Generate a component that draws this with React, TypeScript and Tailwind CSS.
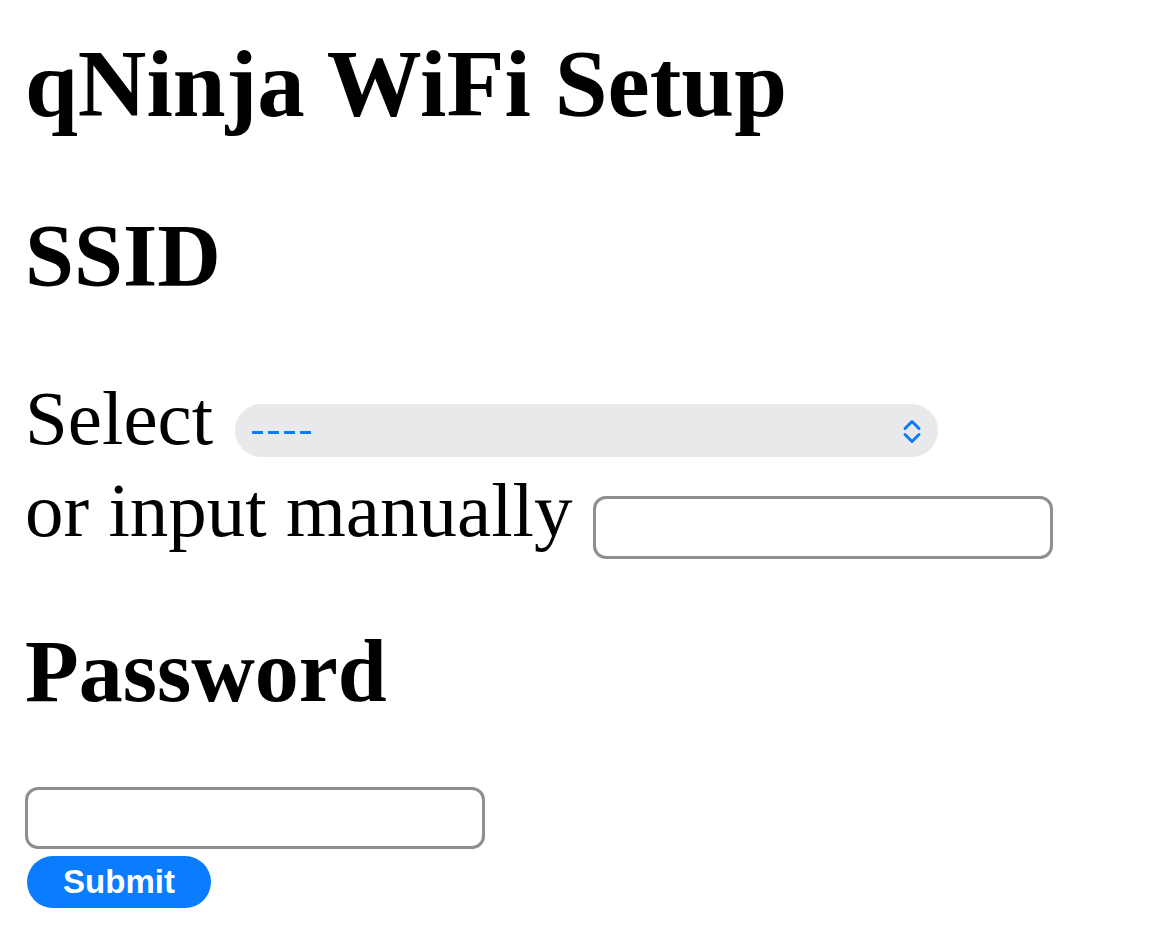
import React from "react";

const serif = { fontFamily: '"Liberation Serif", "Times New Roman", serif' };

export default function App() {
  return (
    <div className="min-h-[940px] w-[1170px] bg-white pl-[25px] text-black" style={serif}>
      <h1 className="pt-[37px] text-[95px] font-bold leading-[94px]">qNinja WiFi Setup</h1>
      <h2 className="mt-[81px] text-[88px] font-bold leading-[88px]">SSID</h2>
      <div className="mt-[80px] flex items-start">
        <span className="text-[77px] leading-[77px]">Select</span>
        <div className="relative ml-[22px] mt-[24px] flex h-[53px] w-[703px] items-center rounded-full bg-[#e9e9eb] pl-[17px]">
          <div className="mt-[4px] flex gap-[5px]">
            <div className="h-[3px] w-[11px] bg-[#0a7cff]" />
            <div className="h-[3px] w-[11px] bg-[#0a7cff]" />
            <div className="h-[3px] w-[11px] bg-[#0a7cff]" />
            <div className="h-[3px] w-[11px] bg-[#0a7cff]" />
          </div>
          <svg className="absolute right-[15px] top-[14px]" width="22" height="27" viewBox="0 0 22 27" fill="none">
            <path d="M4 10.5 L11 3.5 L18 10.5" stroke="#0a7cff" strokeWidth="3" strokeLinecap="round" strokeLinejoin="round" />
            <path d="M4 16.5 L11 23.5 L18 16.5" stroke="#0a7cff" strokeWidth="3" strokeLinecap="round" strokeLinejoin="round" />
          </svg>
        </div>
      </div>
      <div className="mt-[15px] flex items-start">
        <span className="text-[77px] leading-[77px]">or input manually</span>
        <input
          type="text"
          className="ml-[21px] mt-[24px] h-[63px] w-[460px] rounded-[13px] border-[3px] border-[#8e8e8e] bg-white outline-none"
        />
      </div>
      <h2 className="mt-[69px] text-[88px] font-bold leading-[88px]">Password</h2>
      <input
        type="password"
        className="mt-[71px] block h-[62px] w-[460px] rounded-[13px] border-[3px] border-[#8e8e8e] bg-white outline-none"
      />
      <button
        className="ml-[2px] mt-[7px] flex h-[52px] w-[184px] items-center justify-center rounded-full bg-[#0a7cff] text-[33px] font-bold text-white"
        style={{ fontFamily: '"Liberation Sans", Arial, sans-serif' }}
      >
        Submit
      </button>
    </div>
  );
}
